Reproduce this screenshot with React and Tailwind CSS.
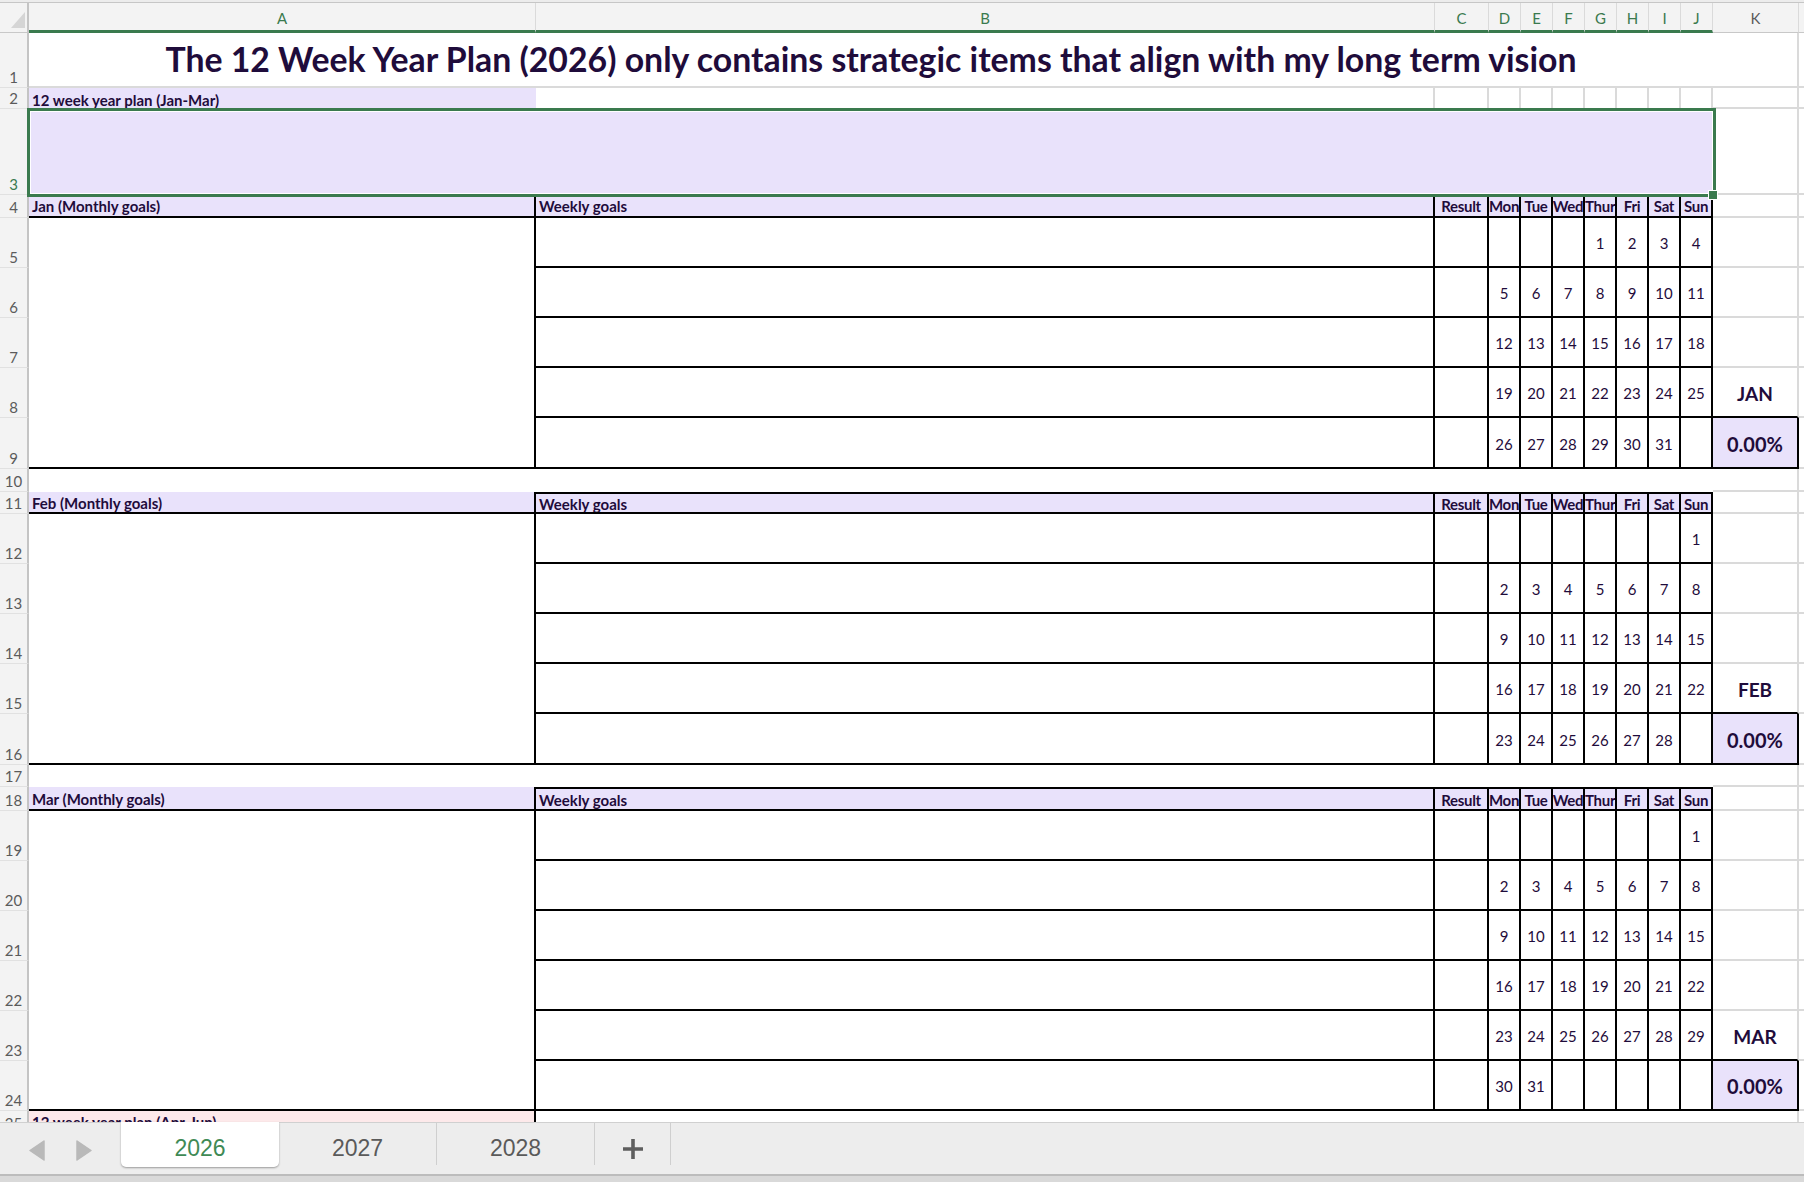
import React from "react";

const TXT = "text-[#1f0c3b]";
const LAV = "bg-[#e9e2fb]";
const GRIDK = "border-r-2 border-r-[#dadada] border-b-2 border-b-[#dadada]";
const LCELL = "border-b-2 border-b-[#dadada]";
const DAYS = ["Result", "Mon", "Tue", "Wed", "Thurs", "Fri", "Sat", "Sun"];
const COLS = ["A", "B", "C", "D", "E", "F", "G", "H", "I", "J"];

function RH({ n, green }) {
  return (
    <div
      className={`flex items-end justify-center pb-[2px] bg-[#f3f3f3] border-r-2 border-r-[#c4c4c4] border-b border-b-[#e1e1e1] text-[15px] leading-none overflow-hidden ${
        green ? "text-[#3a7a4e]" : "text-[#5b5b5b]"
      }`}
    >
      {n}
    </div>
  );
}

function kCell(key) {
  return <div key={key} className={GRIDK} />;
}
function lCell(key) {
  return <div key={key} className={LCELL} />;
}

function section(p, start, label, first, weeks, month) {
  const out = [];
  const n = weeks.length;
  out.push(<RH key={`${p}rh`} n={start} />);
  out.push(
    <div
      key={`${p}a`}
      className={`${LAV} border-r-2 border-r-black border-b-2 border-b-black flex items-center pt-[2px] pl-[3px] text-[15px] font-bold whitespace-nowrap overflow-hidden`}
    >
      {label}
    </div>
  );
  out.push(
    <div
      key={`${p}b`}
      className={`${LAV} border-r-2 border-r-black border-b-2 border-b-black ${
        first ? "" : "border-t-2 border-t-black"
      } flex items-center pt-[2px] pl-[3px] text-[15px] font-bold whitespace-nowrap overflow-hidden`}
    >
      Weekly goals
    </div>
  );
  DAYS.forEach((d, i) => {
    out.push(
      <div
        key={`${p}d${i}`}
        className={`${LAV} border-r-2 border-r-black border-b-2 border-b-black ${
          first ? "" : "border-t-2 border-t-black"
        } flex items-center pt-[2px] ${
          d === "Thurs" ? "justify-start" : "justify-center"
        } text-[15px] font-bold whitespace-nowrap overflow-hidden leading-none tracking-[-0.3px]`}
      >
        {d}
      </div>
    );
  });
  out.push(kCell(`${p}k`));
  out.push(lCell(`${p}l`));
  weeks.forEach((w, i) => {
    out.push(<RH key={`${p}rh${i}`} n={start + 1 + i} />);
    if (i === 0) {
      out.push(
        <div
          key={`${p}am`}
          className={`${
            n === 6 ? "row-span-6" : "row-span-5"
          } border-r-2 border-r-black border-b-2 border-b-black`}
        />
      );
    }
    out.push(
      <div
        key={`${p}b${i}`}
        className="border-r-2 border-r-black border-b-2 border-b-black"
      />
    );
    out.push(
      <div
        key={`${p}c${i}`}
        className="border-r-2 border-r-black border-b-2 border-b-black"
      />
    );
    w.forEach((v, j) => {
      out.push(
        <div
          key={`${p}n${i}_${j}`}
          className="border-r-2 border-r-black border-b-2 border-b-black flex items-center justify-center pt-[3px] text-[15px] leading-none"
        >
          {v || ""}
        </div>
      );
    });
    if (i === n - 2) {
      out.push(
        <div
          key={`${p}k${i}`}
          className="border-r-2 border-r-[#dadada] border-b-2 border-b-black flex items-center justify-center pt-[5px] text-[19px] font-bold"
        >
          {month}
        </div>
      );
    } else if (i === n - 1) {
      out.push(
        <div
          key={`${p}k${i}`}
          className={`${LAV} border-r-2 border-r-black border-b-2 border-b-black flex items-center justify-center pt-[2px] text-[20px] font-bold`}
        >
          0.00%
        </div>
      );
    } else {
      out.push(kCell(`${p}k${i}`));
    }
    out.push(lCell(`${p}l${i}`));
  });
  return out;
}

function spacer(p, n) {
  return [
    <RH key={`${p}rh`} n={n} />,
    <div key={`${p}m`} className="col-span-10" />,
    kCell(`${p}k`),
    lCell(`${p}l`),
  ];
}

const JAN = [
  [0, 0, 0, 1, 2, 3, 4],
  [5, 6, 7, 8, 9, 10, 11],
  [12, 13, 14, 15, 16, 17, 18],
  [19, 20, 21, 22, 23, 24, 25],
  [26, 27, 28, 29, 30, 31, 0],
];
const FEB = [
  [0, 0, 0, 0, 0, 0, 1],
  [2, 3, 4, 5, 6, 7, 8],
  [9, 10, 11, 12, 13, 14, 15],
  [16, 17, 18, 19, 20, 21, 22],
  [23, 24, 25, 26, 27, 28, 0],
];
const MAR = [
  [0, 0, 0, 0, 0, 0, 1],
  [2, 3, 4, 5, 6, 7, 8],
  [9, 10, 11, 12, 13, 14, 15],
  [16, 17, 18, 19, 20, 21, 22],
  [23, 24, 25, 26, 27, 28, 29],
  [30, 31, 0, 0, 0, 0, 0],
];

function TabBar() {
  return (
    <div className="h-[60px] flex flex-col font-['Liberation_Sans',Arial,sans-serif]">
      <div className="h-[52px] flex items-start bg-[#ededed] border-t border-t-[#d0d0d0]">
        <div className="w-[121px] h-full">
          <svg width="121" height="51" viewBox="0 0 121 51">
            <path
              d="M44 18 L30 27.5 L44 37 Z"
              fill="#b9b9b9"
              stroke="#b9b9b9"
              strokeWidth="1.5"
              strokeLinejoin="round"
            />
            <path
              d="M77 18 L91 27.5 L77 37 Z"
              fill="#b9b9b9"
              stroke="#b9b9b9"
              strokeWidth="1.5"
              strokeLinejoin="round"
            />
          </svg>
        </div>
        <div className="w-[158px] h-[45px] -mt-px bg-white rounded-b-[5px] shadow-[0_1px_2px_rgba(0,0,0,0.35)] flex items-center justify-center pt-[7px] text-[23px] text-[#3f8a55]">
          2026
        </div>
        <div className="w-[157px] h-full flex items-center justify-center text-[23px] text-[#5a5a5a]">
          2027
        </div>
        <div className="w-px h-[42px] bg-[#cfcfcf]" />
        <div className="w-[157px] h-full flex items-center justify-center text-[23px] text-[#5a5a5a]">
          2028
        </div>
        <div className="w-px h-[42px] bg-[#cfcfcf]" />
        <div className="w-[75px] h-full flex items-center justify-center">
          <svg width="20" height="20" viewBox="0 0 20 20">
            <path d="M10 0 V20 M0 10 H20" stroke="#5e5e5e" strokeWidth="3.6" />
          </svg>
        </div>
        <div className="w-px h-[42px] bg-[#cfcfcf]" />
      </div>
      <div className="h-[2px] bg-[#bcbcbc]" />
      <div className="flex-1 bg-[#d9d9d9]" />
    </div>
  );
}

export default function App() {
  return (
    <div
      className={`w-[1804px] h-[1182px] overflow-hidden bg-white font-['Lato','Noto_Sans',sans-serif] ${TXT} flex flex-col`}
    >
      <div className="h-[1122px] overflow-hidden">
        <div className="h-[3px] bg-[#ececec] border-b border-b-[#c6c6c6]" />
        <div className="grid grid-cols-[29px_507px_899px_54px_32px_32px_32px_32px_32px_32px_32px_86px_1fr] grid-rows-[30px_55px_21px_86px_23px_50px_50px_50px_50px_51px_23px_22px_50px_50px_50px_50px_51px_22px_24px_50px_50px_50px_50px_50px_50px_23px]">
          <div className="bg-[#f3f3f3] border-r-2 border-r-[#c4c4c4] border-b border-b-[#c8c8c8]">
            <svg width="27" height="29" viewBox="0 0 27 29">
              <path d="M11 25 L25 25 L25 9 Z" fill="#d5d5d5" />
            </svg>
          </div>
          {COLS.map((c) => (
            <div
              key={`ch${c}`}
              className="bg-[#f3f3f3] border-r border-r-[#dadada] border-b-[3px] border-b-[#3a7a4e] flex items-center justify-center pt-[3px] text-[15px] text-[#3a7a4e]"
            >
              {c}
            </div>
          ))}
          <div className="bg-[#f3f3f3] border-r border-r-[#dadada] border-b border-b-[#c8c8c8] flex items-center justify-center pt-[2px] text-[15px] text-[#5b5b5b]">
            K
          </div>
          <div className="bg-[#f3f3f3] border-b border-b-[#c8c8c8]" />

          <RH n={1} />
          <div className="col-span-10 border-b-2 border-b-[#dadada] flex items-center justify-center text-[33.8px] font-bold whitespace-nowrap">
            The 12 Week Year Plan (2026) only contains strategic items that align with my long term vision
          </div>
          {kCell("k1")}
          {lCell("l1")}

          <RH n={2} />
          <div
            className={`${LAV} flex items-end pb-0 pl-[3px] text-[15px] font-bold whitespace-nowrap leading-[18px]`}
          >
            12 week year plan (Jan-Mar)
          </div>
          <div className="border-r-2 border-r-[#dadada]" />
          <div className="border-r-2 border-r-[#dadada]" />
          <div className="border-r-2 border-r-[#dadada]" />
          <div className="border-r-2 border-r-[#dadada]" />
          <div className="border-r-2 border-r-[#dadada]" />
          <div className="border-r-2 border-r-[#dadada]" />
          <div className="border-r-2 border-r-[#dadada]" />
          <div className="border-r-2 border-r-[#dadada]" />
          <div className="border-r-2 border-r-[#dadada]" />
          {kCell("k2")}
          {lCell("l2")}

          <RH n={3} green />
          <div className={`col-span-10 ${LAV} relative`}>
            <div className="absolute -left-[2px] -top-[1px] -right-[3px] -bottom-[2px] border-[3px] border-[#3a7a4e]">
              <div className="h-full w-full border border-white" />
            </div>
            <div className="absolute -right-[5px] -bottom-[5px] w-[10px] h-[10px] bg-[#3a7a4e] border border-white" />
          </div>
          {kCell("k3")}
          {lCell("l3")}

          {section("jan", 4, "Jan (Monthly goals)", true, JAN, "JAN")}
          {spacer("s10", 10)}
          {section("feb", 11, "Feb (Monthly goals)", false, FEB, "FEB")}
          {spacer("s17", 17)}
          {section("mar", 18, "Mar (Monthly goals)", false, MAR, "MAR")}

          <RH n={25} />
          <div className="bg-[#fde9ea] border-r-2 border-r-black flex items-center pl-[3px] text-[15px] font-bold whitespace-nowrap">
            12 week year plan (Apr-Jun)
          </div>
          <div className="col-span-9" />
          {kCell("k25")}
          {lCell("l25")}
        </div>
      </div>
      <TabBar />
    </div>
  );
}
